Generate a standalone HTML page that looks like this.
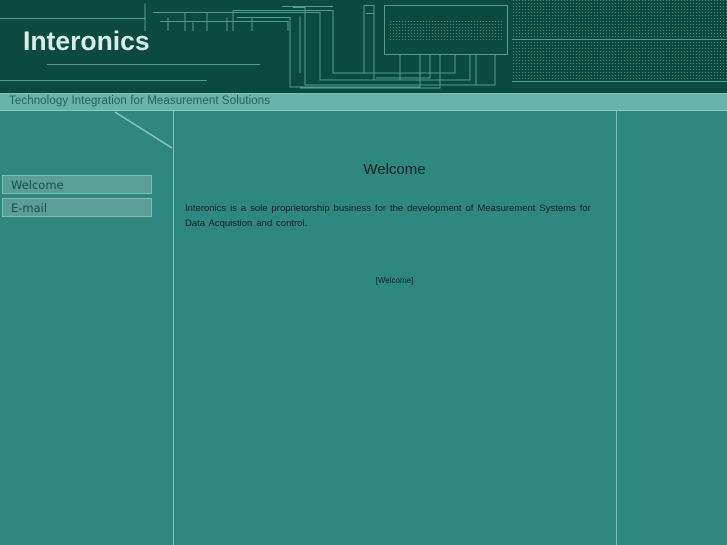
<!DOCTYPE html>
<html><head><style>
html,body{margin:0;padding:0;width:727px;height:545px;overflow:hidden;background:#2e8880;font-family:"Liberation Sans",sans-serif}
.hdr{position:absolute;left:0;top:0;width:727px;height:93px;background:#0c4a3f}
.band{position:absolute;left:0;top:93px;width:727px;height:18px;background:#68b3a9;border-top:1px solid #7cc2b8;border-bottom:1px solid #8ccbc2;box-sizing:border-box}
.band span{position:absolute;left:9px;top:1px;font-size:11.5px;color:#2c5e58;letter-spacing:0.1px}
.logo{position:absolute;left:23px;top:26px;font-size:26.5px;font-weight:bold;color:#d8efe9;font-family:"Liberation Sans",sans-serif}
.btn{position:absolute;left:2px;width:150px;height:19px;background:#5a9e95;border:1px solid #7dbab1;box-sizing:border-box;font-size:11.5px;color:#1f4f49;padding:2px 0 0 8px;font-family:"DejaVu Sans",sans-serif}
.vl{position:absolute;top:111px;width:1px;height:434px;background:#7cbeb5}
h1{position:absolute;left:173px;width:443px;top:161px;margin:0;text-align:center;font-size:15px;font-weight:normal;color:#0d1f1c}
.p{position:absolute;left:185px;top:201px;width:418px;font-size:9.5px;line-height:15px;color:#0d1f1c;word-spacing:1.3px}
.w{position:absolute;left:173px;width:443px;top:276px;text-align:center;font-size:8px;color:#0d1f1c}
</style></head><body>
<div class="hdr">
<svg width="727" height="93" style="position:absolute;left:0;top:0">
<defs><pattern id="d" width="3" height="3" patternUnits="userSpaceOnUse"><rect width="1" height="1" fill="#3f8a7d"/></pattern></defs>
<rect x="512" y="0" width="215" height="37" fill="url(#d)"/>
<rect x="512" y="42" width="215" height="37" fill="url(#d)"/>
<line x1="512" y1="39.5" x2="727" y2="39.5" stroke="#4f9c90"/>
<line x1="512" y1="81.5" x2="727" y2="81.5" stroke="#4f9c90"/>
<rect x="389" y="20" width="115" height="20" fill="url(#d)"/>
<rect x="384.5" y="5.5" width="123" height="49" fill="none" stroke="#4f9c90"/>
<g fill="none" stroke="#4f9c90" stroke-width="1">
<path d="M0 18.5H145M145 3.5V31M153 12.5H320V80H400V55M185 12.5V31M193 22.5V31M207 12.5V31M233 10.5V31M237 17.5H290V87H420V55M227 17.5V31M252 17.5V31M233 10.5H333V73H364V5.5H374V80H470V55M282 6.5H333M293 7.5H305V85H476V55M300 16.5V73M160 21.5H288V31M168 17.5V31"/>
<path d="M47 64.5H260M0 80.5H207"/>
<path d="M366 13.5H374M430 55V78H376M440 55V88H300M455 55V73H340M495 55V85H320"/>
</g>
</svg>
<div class="logo">Interonics</div>
</div>
<div class="band"><span>Technology Integration for Measurement Solutions</span></div>
<svg width="180" height="80" style="position:absolute;left:0;top:111px">
<path d="M115 1L172 37" stroke="#8bc8bf" stroke-width="1.5" fill="none"/>
</svg>
<div class="vl" style="left:173px"></div>
<div class="vl" style="left:616px"></div>
<div class="btn" style="top:175px">Welcome</div>
<div class="btn" style="top:198px">E-mail</div>
<h1>Welcome</h1>
<div class="p">Interonics is a sole proprietorship business for the development of Measurement Systems for Data Acquistion and control.</div>
<div class="w">[Welcome]</div>
</body></html>
